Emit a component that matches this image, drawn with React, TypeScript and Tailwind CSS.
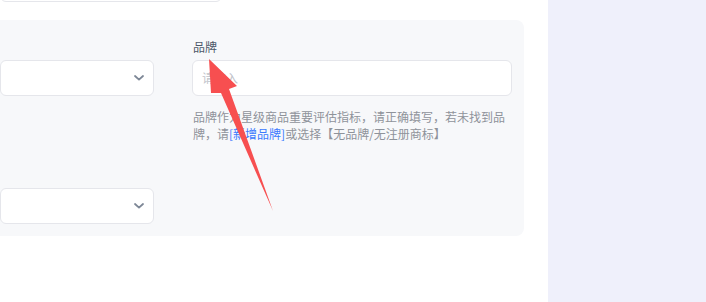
import React from "react";

function Chevron() {
  return (
    <svg width="10" height="6" viewBox="0 0 10 6" className="shrink-0">
      <path d="M1 1 L5 4.6 L9 1" fill="none" stroke="#7d8796" strokeWidth="1.8" strokeLinecap="round" strokeLinejoin="round" />
    </svg>
  );
}

function SelectBox() {
  return (
    <div className="h-[36px] w-[154px] bg-white border border-[#e5e6eb] rounded-md flex items-center justify-end pr-[9px]">
      <Chevron />
    </div>
  );
}

export default function App() {
  return (
    <div
      className="relative w-[706px] h-[302px] overflow-hidden bg-white flex"
      style={{ fontFamily: '"Noto Sans CJK SC", "Noto Sans", sans-serif' }}
    >
      <div className="w-[548px] shrink-0 flex flex-col">
        <div className="w-[222px] h-[34px] -mt-[32px] border border-[#e5e6eb] rounded-md bg-white shrink-0" />
        <div className="mt-[18px] w-[524px] h-[216px] bg-[#f7f8fa] rounded-r-lg flex pt-[20px]">
          <div className="w-[154px] shrink-0 flex flex-col pt-[20px]">
            <SelectBox />
            <div className="mt-[92px]">
              <SelectBox />
            </div>
          </div>
          <div className="ml-[38px] w-[320px] flex flex-col">
            <div className="h-[20px] pl-[1px] text-[12px] leading-[14px] text-[#4e5969]">品牌</div>
            <div className="h-[36px] bg-white border border-[#e5e6eb] rounded-md flex items-center pl-[9px] text-[12px] text-[#bfc3ca]">
              请输入
            </div>
            <div className="mt-[12px] pl-[1px] text-[12px] leading-[17px] text-[#8f939a]">
              品牌作为星级商品重要评估指标，请正确填写，若未找到品牌，请<span className="text-[#3a7afe]">[新增品牌]</span>或选择【无品牌/无注册商标】
            </div>
          </div>
        </div>
      </div>
      <div className="flex-1 bg-[#eff0fb]" />
      <svg className="absolute left-0 top-0 pointer-events-none" width="706" height="302" viewBox="0 0 706 302">
        <polygon
          points="209,59 237,86 229,89 273,211 221,93 211,93"
          fill="#f74f50"
        />
      </svg>
    </div>
  );
}
